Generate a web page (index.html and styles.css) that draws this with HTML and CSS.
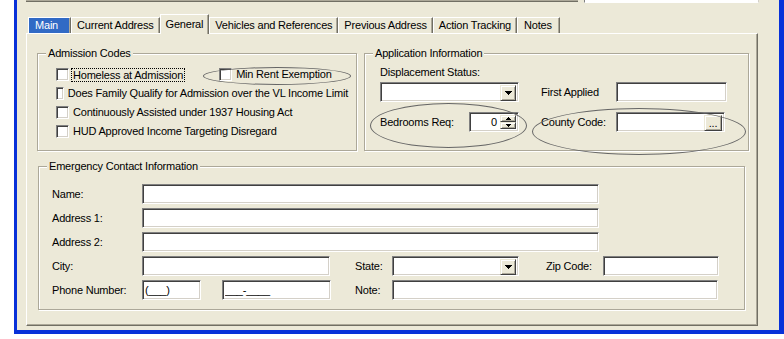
FILE: index.html
```html
<!DOCTYPE html>
<html lang="en">
<head>
  <meta charset="UTF-8">
  <title>General</title>
  <link rel="stylesheet" href="styles.css">
</head>
<body>
  <div class="window">
    <div class="topbar">
      <div class="edge"></div>
      <div class="edge-field"></div>
    </div>

    <div class="tabs">
      <div class="tab hot">Main</div>
      <div class="tab">Current Address</div>
      <div class="tab on">General</div>
      <div class="tab">Vehicles and References</div>
      <div class="tab">Previous Address</div>
      <div class="tab">Action Tracking</div>
      <div class="tab last">Notes</div>
    </div>

    <div class="panel">
      <div class="groups">
        <fieldset class="group admission">
          <legend>Admission Codes</legend>
          <div class="checks">
            <div class="check-row">
              <label class="check"><input type="checkbox"><span class="focus">Homeless at Admission</span></label>
              <label class="check min"><input type="checkbox"><span>Min Rent Exemption</span></label>
            </div>
            <label class="check"><input type="checkbox"><span>Does Family Qualify for Admission over the VL Income Limit</span></label>
            <label class="check"><input type="checkbox"><span>Continuously Assisted under 1937 Housing Act</span></label>
            <label class="check"><input type="checkbox"><span>HUD Approved Income Targeting Disregard</span></label>
          </div>
        </fieldset>

        <fieldset class="group application">
          <legend>Application Information</legend>
          <div class="app-status">Displacement Status:</div>
          <div class="app-line">
            <div class="field select w-disp">
              <span class="btn"><svg width="7" height="4" viewBox="0 0 7 4"><path d="M0 0H7V1H6V2H5V3H4V4H3V3H2V2H1V1H0Z"/></svg></span>
            </div>
            <span class="lbl">First Applied</span>
            <input class="field w-first" type="text">
          </div>
          <div class="app-line">
            <div class="bedrooms">
              <span>Bedrooms Req:</span>
              <div class="field spin">
                <span class="val">0</span>
                <span class="spin-btns">
                  <span class="btn"><svg width="5" height="3" viewBox="0 0 5 3"><path d="M2 0H3V1H4V2H5V3H0V2H1V1H2Z"/></svg></span>
                  <span class="btn"><svg width="5" height="3" viewBox="0 0 5 3"><path d="M0 0H5V1H4V2H3V3H2V2H1V1H0Z"/></svg></span>
                </span>
              </div>
            </div>
            <span class="lbl">County Code:</span>
            <div class="field lookup"><span class="btn dots">...</span></div>
          </div>
        </fieldset>
      </div>

      <fieldset class="group contact">
        <legend>Emergency Contact Information</legend>
        <div class="line">
          <span class="lbl">Name:</span>
          <input class="field w-long" type="text">
        </div>
        <div class="line">
          <span class="lbl">Address 1:</span>
          <input class="field w-long" type="text">
        </div>
        <div class="line">
          <span class="lbl">Address 2:</span>
          <input class="field w-long" type="text">
        </div>
        <div class="line">
          <span class="lbl">City:</span>
          <input class="field w-city" type="text">
          <span class="lbl small">State:</span>
          <div class="field select w-state">
            <span class="btn"><svg width="7" height="4" viewBox="0 0 7 4"><path d="M0 0H7V1H6V2H5V3H4V4H3V3H2V2H1V1H0Z"/></svg></span>
          </div>
          <span class="lbl zip">Zip Code:</span>
          <input class="field w-zip" type="text">
        </div>
        <div class="line">
          <span class="lbl">Phone Number:</span>
          <input class="field w-area" type="text" value="(___)">
          <input class="field w-phone" type="text" value="___-____">
          <span class="lbl small">Note:</span>
          <input class="field w-note" type="text">
        </div>
      </fieldset>

      <div class="oval oval-min"></div>
      <div class="oval oval-beds"></div>
      <div class="oval oval-county"></div>
    </div>
  </div>
</body>
</html>
```

FILE: styles.css
```css
* { box-sizing: border-box; }
body { margin: 0; background: #fff; font: 11px/13px "Liberation Sans", Arial, sans-serif; letter-spacing: -0.2px; color: #000; }

.window {
  width: 770px;
  height: 334px;
  margin-left: 14px;
  background: #ece9d8;
  border: solid #0831d9;
  border-width: 0 5px 4px 3px;
}

/* bits of the controls above, cut off by the screenshot */
.topbar { display: flex; height: 3px; }
.topbar .edge { width: 552px; height: 2px; margin-left: 9px; background: #aca899; border-bottom: 1px solid #716f64; }
.topbar .edge-field {
  width: 175px;
  margin-left: 6px;
  background: #fff;
  border: solid;
  border-width: 0 1px 1px;
  border-color: #808080 #d4d0c8 #fff #808080;
}

/* tabs */
.tabs { display: flex; align-items: flex-end; height: 19px; margin: 11px 0 0 11px; position: relative; z-index: 1; }
.tab {
  height: 16px;
  padding: 0 5px;
  border: 1px solid #fff;
  border-bottom: 0;
  border-right-color: #716f64;
  box-shadow: inset -1px 0 #aca899;
  line-height: 14px;
  white-space: nowrap;
}
.tab.hot { padding: 0 12px 0 6px; background: #316ac5; color: #fff; }
.tab.on { height: 20px; margin-bottom: -1px; padding-top: 2px; background: #ece9d8; }
.tab.last { padding: 0 7px 0 6px; }

.panel {
  position: relative;
  width: 732px;
  height: 293px;
  margin-left: 9px;
  border: 1px solid;
  border-color: #fff #716f64 #716f64 #fff;
  box-shadow: inset -1px -1px #aca899;
}

/* group boxes */
.groups { display: flex; gap: 7px; margin: 13px 0 0 10px; }
.group {
  margin: 0;
  padding: 5px 8px 9px;
  border: 1px solid #aca899;
  box-shadow: inset 1px 1px #fff, 1px 1px #fff;
  min-width: 0;
}
.group legend { padding: 0 2px; background: #ece9d8; }
.admission { width: 320px; }
.application { width: 385px; }
.contact { width: 707px; margin: 9px 0 0 11px; padding-top: 11px; }

/* checkboxes */
.checks { margin-left: 10px; }
.check-row { display: flex; }
.check { display: flex; align-items: center; gap: 4px; height: 19px; white-space: nowrap; }
.check input {
  appearance: none;
  width: 13px;
  height: 13px;
  margin: 0;
  background: #fff;
  border: 1px solid;
  border-color: #808080 #fff #fff #808080;
  box-shadow: inset 1px 1px #404040, inset -1px -1px #d4d0c8;
}
.check .focus { margin-left: -2px; padding: 0 1px; border: 1px dotted #000; line-height: 12px; }
.check.min { margin-left: 34px; }

/* sunken fields and raised buttons */
.field {
  height: 20px;
  background: #fff;
  border: 1px solid;
  border-color: #808080 #fff #fff #808080;
  box-shadow: inset 1px 1px #404040, inset -1px -1px #d4d0c8;
}
input.field { margin: 0; padding: 0 2px; font: inherit; letter-spacing: inherit; color: #000; outline: none; }
.btn {
  display: flex;
  align-items: center;
  justify-content: center;
  background: #ece9d8;
  border: 1px solid;
  border-color: #ece9d8 #404040 #404040 #ece9d8;
  box-shadow: inset 1px 1px #fff, inset -1px -1px #aca899;
}
.select { display: flex; justify-content: flex-end; padding: 2px; }
.select .btn { width: 16px; height: 16px; }

.spin { width: 50px; display: flex; justify-content: flex-end; padding: 2px; }
.spin .val { align-self: center; padding-right: 3px; }
.spin-btns { display: flex; flex-direction: column; width: 16px; }
.spin-btns .btn { height: 8px; }

.lookup { display: flex; justify-content: flex-end; width: 109px; padding: 2px; }
.lookup .dots { width: 18px; height: 16px; align-items: flex-end; padding-bottom: 1px; line-height: 12px; }

/* application information */
.app-status { margin: 1px 0 3px 7px; }
.app-line { display: flex; align-items: center; height: 20px; margin-left: 7px; }
.app-line + .app-line { margin-top: 10px; }
.app-line .lbl { width: 97px; padding-left: 22px; }
.w-disp { width: 139px; }
.w-first { width: 111px; }
.bedrooms { display: flex; align-items: center; justify-content: space-between; width: 139px; }

/* emergency contact */
.line { display: flex; align-items: center; height: 20px; margin-left: 5px; }
.line + .line { margin-top: 4px; }
.line .lbl { width: 90px; }
.line .lbl.small { width: 37px; margin-left: 25px; }
.line .lbl.zip { width: 57px; margin-left: 27px; }
.w-long { width: 457px; }
.w-city { width: 188px; }
.w-state { width: 127px; }
.w-zip { width: 116px; }
.w-area { width: 59px; }
input.w-phone { width: 109px; margin-left: 21px; }
.w-note { width: 326px; }
.line .w-phone + .lbl.small { margin-left: 24px; }

/* hand-drawn highlight rings */
.oval { position: absolute; border: 1px solid #666; border-radius: 50%; }
.oval-min { left: 176px; top: 33px; width: 148px; height: 18px; }
.oval-beds { left: 343px; top: 69px; width: 157px; height: 45px; }
.oval-county { left: 505px; top: 74px; width: 214px; height: 47px; }
```
